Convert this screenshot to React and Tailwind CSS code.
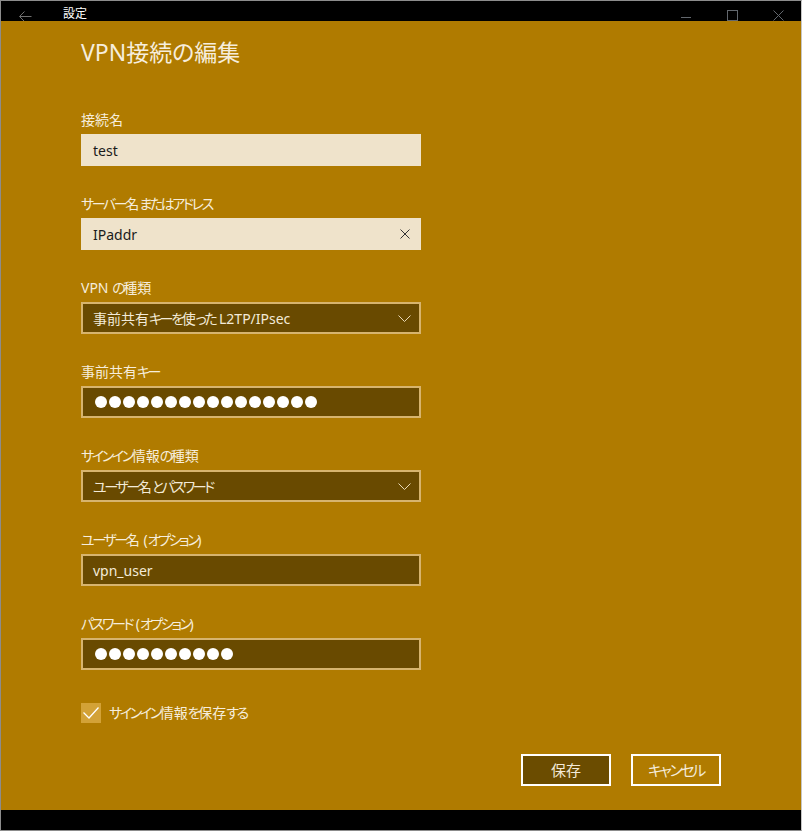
import React from "react";

// window chrome + VPN edit form (Windows settings, gold accent theme)
const FONT = "font-['Noto_Sans','Noto_Sans_CJK_JP',sans-serif] [font-feature-settings:'palt']";

// kana in the original UI font are narrow; tighten kana runs only
const K = ({ text }) =>
  text.split(/([\u3040-\u30ff]+)/).map((part, i) =>
    /[\u3040-\u30ff]/.test(part) ? (
      <span key={i} className="tracking-[-2.4px]">
        {part}
      </span>
    ) : (
      <span key={i}>{part}</span>
    )
  );

const Label = ({ text }) => (
  <div className="text-[14px] leading-[20px] text-[#f6eddc] mb-[4px]">
    <K text={text} />
  </div>
);

const Chevron = () => (
  <svg width="13" height="7" viewBox="0 0 13 7" fill="none">
    <path d="M0.5 0.5 L6.5 6.5 L12.5 0.5" stroke="#e8d8b6" strokeWidth="1" />
  </svg>
);

const Dots = ({ count }) => (
  <div className="flex gap-[2px] ml-[2px]">
    {Array.from({ length: count }).map((_, i) => (
      <span key={i} className="w-[12px] h-[12px] rounded-full bg-white" />
    ))}
  </div>
);

const LightInput = ({ value, clear }) => (
  <div className="w-[340px] h-[32px] bg-[#efe3cb] flex items-center justify-between pl-[12px] pr-[11px] text-[14px] text-[#1b1b1b]">
    <span>{value}</span>
    {clear && (
      <svg width="10" height="10" viewBox="0 0 10 10" fill="none">
        <path d="M0.5 0.5 L9.5 9.5 M9.5 0.5 L0.5 9.5" stroke="#333" strokeWidth="1" />
      </svg>
    )}
  </div>
);

const DarkInput = ({ children, select }) => (
  <div className="w-[340px] h-[32px] bg-[#694a00] border-2 border-[#d7b46e] flex items-center justify-between pl-[10px] pr-[8px] text-[14px] text-[#f3ead8]">
    <div className="flex items-center">{children}</div>
    {select && <Chevron />}
  </div>
);

export default function App() {
  return (
    <div className={`w-[802px] h-[831px] flex flex-col border-l border-t border-b border-[#8c8c8c] border-r border-r-[#c6c6c6] ${FONT}`}>
      {/* title bar */}
      <div className="h-[20px] bg-black flex items-start">
        <div className="w-[46px] pt-[10px] pl-[18px]">
          <svg width="13" height="11" viewBox="0 0 13 11" fill="none">
            <path d="M12.5 5.5 H0.8 M5.5 0.5 L0.5 5.5 L5.5 10.5" stroke="#6f6f6f" strokeWidth="1" />
          </svg>
        </div>
        <div className="ml-[16px] pt-[5px] text-[12px] leading-[15px] text-white">設定</div>
        <div className="ml-auto flex">
          <div className="w-[46px] flex justify-center pt-[16px]">
            <div className="w-[10px] h-px bg-[#62676d]" />
          </div>
          <div className="w-[46px] flex justify-center pt-[9px]">
            <div className="w-[11px] h-[11px] border border-[#62676d]" />
          </div>
          <div className="w-[46px] flex justify-center pt-[9px]">
            <svg width="11" height="11" viewBox="0 0 11 11" fill="none">
              <path d="M0.5 0.5 L10.5 10.5 M10.5 0.5 L0.5 10.5" stroke="#62676d" strokeWidth="1" />
            </svg>
          </div>
        </div>
      </div>

      {/* body */}
      <div className="flex-1 bg-[#b07b00] pl-[80px] pr-[80px] pt-[15px] flex flex-col">
        <h1 className="text-[23px] leading-[32px] text-[#f6eddc] mb-[42px]">VPN接続の編集</h1>

        <div className="flex flex-col gap-[28px]">
          <div>
            <Label text="接続名" />
            <LightInput value="test" />
          </div>
          <div>
            <Label text="サーバー名またはアドレス" />
            <LightInput value="IPaddr" clear />
          </div>
          <div>
            <Label text="VPN の種類" />
            <DarkInput select>
              <span>
                <K text="事前共有キーを使った L2TP/IPsec" />
              </span>
            </DarkInput>
          </div>
          <div>
            <Label text="事前共有キー" />
            <DarkInput>
              <Dots count={16} />
            </DarkInput>
          </div>
          <div>
            <Label text="サインイン情報の種類" />
            <DarkInput select>
              <span>
                <K text="ユーザー名とパスワード" />
              </span>
            </DarkInput>
          </div>
          <div>
            <Label text="ユーザー名 (オプション)" />
            <DarkInput>vpn_user</DarkInput>
          </div>
          <div>
            <Label text="パスワード (オプション)" />
            <DarkInput>
              <Dots count={10} />
            </DarkInput>
          </div>
        </div>

        <div className="mt-[33px] flex items-center gap-[8px]">
          <div className="w-[20px] h-[20px] bg-[#d3a237] flex items-center justify-center">
            <svg width="20" height="20" viewBox="0 0 20 20" fill="none">
              <path d="M2.5 9.5 L8 15 L17.5 4.5" stroke="white" strokeWidth="1.3" />
            </svg>
          </div>
          <span className="text-[14px] leading-[20px] text-[#f6eddc]">
            <K text="サインイン情報を保存する" />
          </span>
        </div>

        <div className="mt-[31px] flex justify-end gap-[20px]">
          <button className="w-[90px] h-[32px] border-2 border-white bg-[#6b4c00] text-[15px] text-[#f3ead8]">
            保存
          </button>
          <button className="w-[90px] h-[32px] border-2 border-white text-[15px] text-[#f3ead8]">
            <K text="キャンセル" />
          </button>
        </div>
      </div>

      {/* bottom strip */}
      <div className="h-[20px] bg-black" />
    </div>
  );
}
